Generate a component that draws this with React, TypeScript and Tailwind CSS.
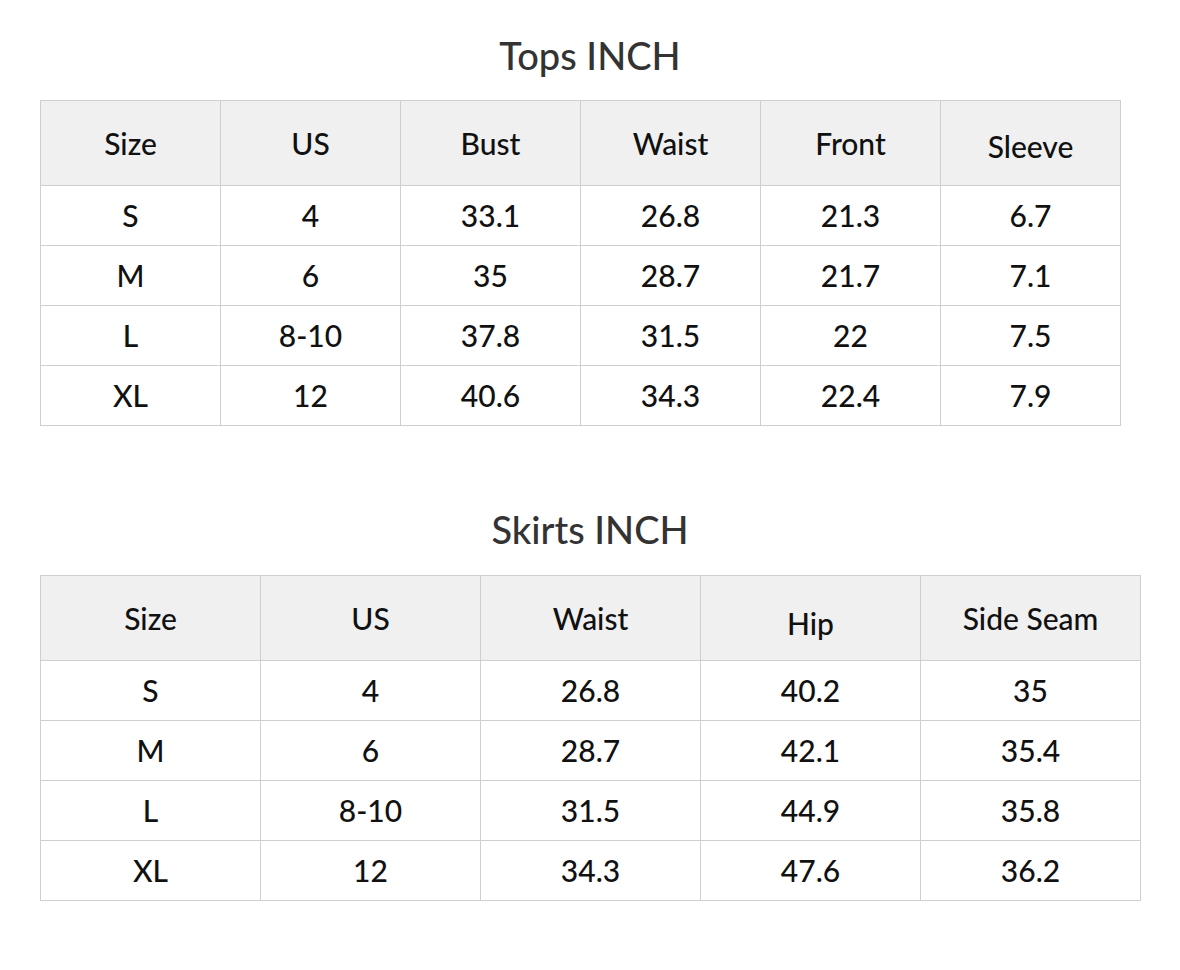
const tops = {
  title: 'Tops INCH',
  head: ['Size', 'US', 'Bust', 'Waist', 'Front', 'Sleeve'],
  rows: [
    ['S', '4', '33.1', '26.8', '21.3', '6.7'],
    ['M', '6', '35', '28.7', '21.7', '7.1'],
    ['L', '8-10', '37.8', '31.5', '22', '7.5'],
    ['XL', '12', '40.6', '34.3', '22.4', '7.9'],
  ],
};

const skirts = {
  title: 'Skirts INCH',
  head: ['Size', 'US', 'Waist', 'Hip', 'Side Seam'],
  rows: [
    ['S', '4', '26.8', '40.2', '35'],
    ['M', '6', '28.7', '42.1', '35.4'],
    ['L', '8-10', '31.5', '44.9', '35.8'],
    ['XL', '12', '34.3', '47.6', '36.2'],
  ],
};

// a few header labels sit a little lower in the original
const nudge: Record<string, string> = { Sleeve: 'pt-[6px]', Hip: 'pt-[10px]' };

function SizeTable({ data, cols }: { data: typeof tops; cols: string }) {
  return (
    <div className={`grid ${cols} border-l border-t border-[#cfcfcf] ml-[40px] w-fit`}>
      {data.head.map((h) => (
        <div
          key={h}
          className={`h-[85px] flex items-center justify-center bg-[#f0f0f0] border-r border-b border-[#cfcfcf] text-[30px] ${nudge[h] ?? ''}`}
        >
          {h}
        </div>
      ))}
      {data.rows.map((r, i) =>
        r.map((c, j) => (
          <div
            key={`${i}-${j}`}
            className="h-[60px] flex items-center justify-center border-r border-b border-[#cfcfcf] text-[30px]"
          >
            {c}
          </div>
        ))
      )}
    </div>
  );
}

export default function App() {
  return (
    <div className="w-[1180px] min-h-[970px] bg-white text-[#111] font-medium" style={{ fontFamily: 'Lato, "Noto Sans", sans-serif' }}>
      <h2 className="pt-[35px] h-[75px] leading-[40px] text-[38px] text-center text-[#333]">{tops.title}</h2>
      <div className="mt-[25px]">
        <SizeTable data={tops} cols="grid-cols-[repeat(6,180px)]" />
      </div>
      <h2 className="mt-[83px] leading-[40px] text-[38px] text-center text-[#333]">{skirts.title}</h2>
      <div className="mt-[26px]">
        <SizeTable data={skirts} cols="grid-cols-[repeat(5,220px)]" />
      </div>
    </div>
  );
}
